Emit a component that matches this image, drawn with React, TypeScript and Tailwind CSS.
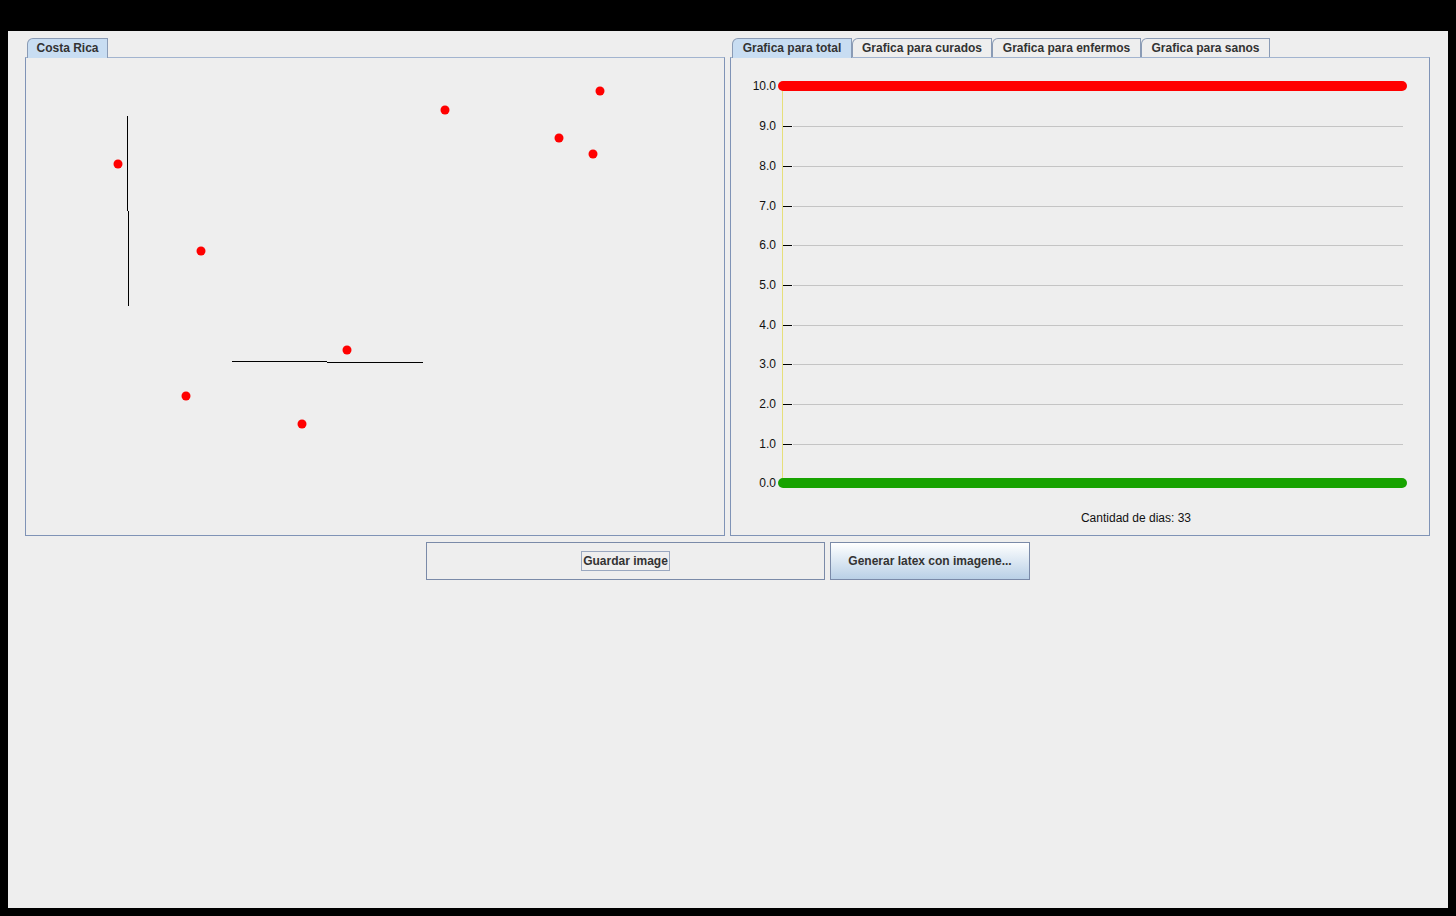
import React from "react";

const font = { fontFamily: '"Liberation Sans", Arial, sans-serif' };

const dots: [number, number][] = [
  [118, 164],
  [201, 251],
  [445, 110],
  [600, 91],
  [559, 138],
  [593, 154],
  [347, 350],
  [186, 396],
  [302, 424],
];

const ticks = [
  { y: 86, label: "10.0" },
  { y: 126, label: "9.0" },
  { y: 166, label: "8.0" },
  { y: 206, label: "7.0" },
  { y: 245, label: "6.0" },
  { y: 285, label: "5.0" },
  { y: 325, label: "4.0" },
  { y: 364, label: "3.0" },
  { y: 404, label: "2.0" },
  { y: 444, label: "1.0" },
  { y: 483, label: "0.0" },
];

const rightTabs = [
  { label: "Grafica para total", w: "w-[120px]", active: true },
  { label: "Grafica para curados", w: "w-[140px]", active: false },
  { label: "Grafica para enfermos", w: "w-[149px]", active: false },
  { label: "Grafica para sanos", w: "w-[129px]", active: false },
];

const Tab: React.FC<{ label: string; w: string; active: boolean }> = ({ label, w, active }) => (
  <div
    className={`${w} h-[20px] flex items-center justify-center pb-[1px] border border-b-0 border-[#8a9bb5] rounded-tl-[6px] text-[12px] font-bold text-[#333333] ${
      active ? "bg-[#c8ddf2] relative z-10" : "bg-[#eeeeee]"
    }`}
  >
    {label}
  </div>
);

const MapCanvas: React.FC = () => (
  <svg className="block" width={698} height={477} viewBox="26 58 698 477">
    <line x1={127.5} y1={116} x2={127.5} y2={211} stroke="#000" strokeWidth={1} />
    <line x1={128.5} y1={211} x2={128.5} y2={306} stroke="#000" strokeWidth={1} />
    <line x1={232} y1={361.5} x2={327} y2={361.5} stroke="#000" strokeWidth={1} />
    <line x1={327} y1={362.5} x2={423} y2={362.5} stroke="#000" strokeWidth={1} />
    {dots.map(([x, y], i) => (
      <circle key={i} cx={x} cy={y} r={4.5} fill="#ff0000" />
    ))}
  </svg>
);

const Chart: React.FC = () => (
  <svg className="block" width={698} height={477} viewBox="731 58 698 477" style={font}>
    {ticks.map((t) => (
      <g key={t.label}>
        <line x1={793} y1={t.y + 0.5} x2={1403} y2={t.y + 0.5} stroke="#c4c4c4" strokeWidth={1} />
        <line x1={783} y1={t.y + 0.5} x2={792} y2={t.y + 0.5} stroke="#000" strokeWidth={1} />
        <text x={776} y={t.y + 4} fontSize={12} textAnchor="end" fill="#111">
          {t.label}
        </text>
      </g>
    ))}
    <line x1={782.5} y1={86} x2={782.5} y2={483} stroke="#e6df7a" strokeWidth={1} />
    <line x1={783} y1={86} x2={1402} y2={86} stroke="#ff0000" strokeWidth={10} strokeLinecap="round" />
    <line x1={783} y1={483} x2={1402} y2={483} stroke="#17a300" strokeWidth={10} strokeLinecap="round" />
    <text x={1136} y={522} fontSize={12} textAnchor="middle" fill="#111">
      Cantidad de dias: 33
    </text>
  </svg>
);

export default function App() {
  return (
    <div className="w-[1456px] h-[916px] bg-black pt-[31px] px-[8px] pb-[8px]" style={font}>
      <div className="w-full h-full bg-[#eeeeee] pt-[7px] pl-[17px] flex flex-col">
        <div className="flex gap-[5px]">
          <div className="w-[700px] flex flex-col">
            <div className="flex pl-[2px] h-[19px] items-start">
              <Tab label="Costa Rica" w="w-[81px]" active />
            </div>
            <div className="w-[700px] h-[479px] border border-[#7f93b6] border-t-[#a2b4cf]">
              <MapCanvas />
            </div>
          </div>
          <div className="w-[700px] flex flex-col">
            <div className="flex pl-[2px] h-[19px] items-start">
              {rightTabs.map((t) => (
                <Tab key={t.label} {...t} />
              ))}
            </div>
            <div className="w-[700px] h-[479px] border border-[#7f93b6] border-t-[#a2b4cf]">
              <Chart />
            </div>
          </div>
        </div>
        <div className="flex justify-center gap-[5px] mt-[6px] -ml-[17px]">
          <button className="w-[399px] h-[38px] border border-[#7a8aa8] bg-[#eeeeee] flex items-center justify-center text-[12px] font-bold text-[#333333]">
            <span className="border border-[#9aa8c0] px-[1px] leading-[18px]">Guardar image</span>
          </button>
          <button className="w-[200px] h-[38px] border border-[#7a8aa8] bg-gradient-to-b from-[#ffffff] to-[#b9d0e6] flex items-center justify-center text-[12px] font-bold text-[#333333]">
            Generar latex con imagene...
          </button>
        </div>
      </div>
    </div>
  );
}
